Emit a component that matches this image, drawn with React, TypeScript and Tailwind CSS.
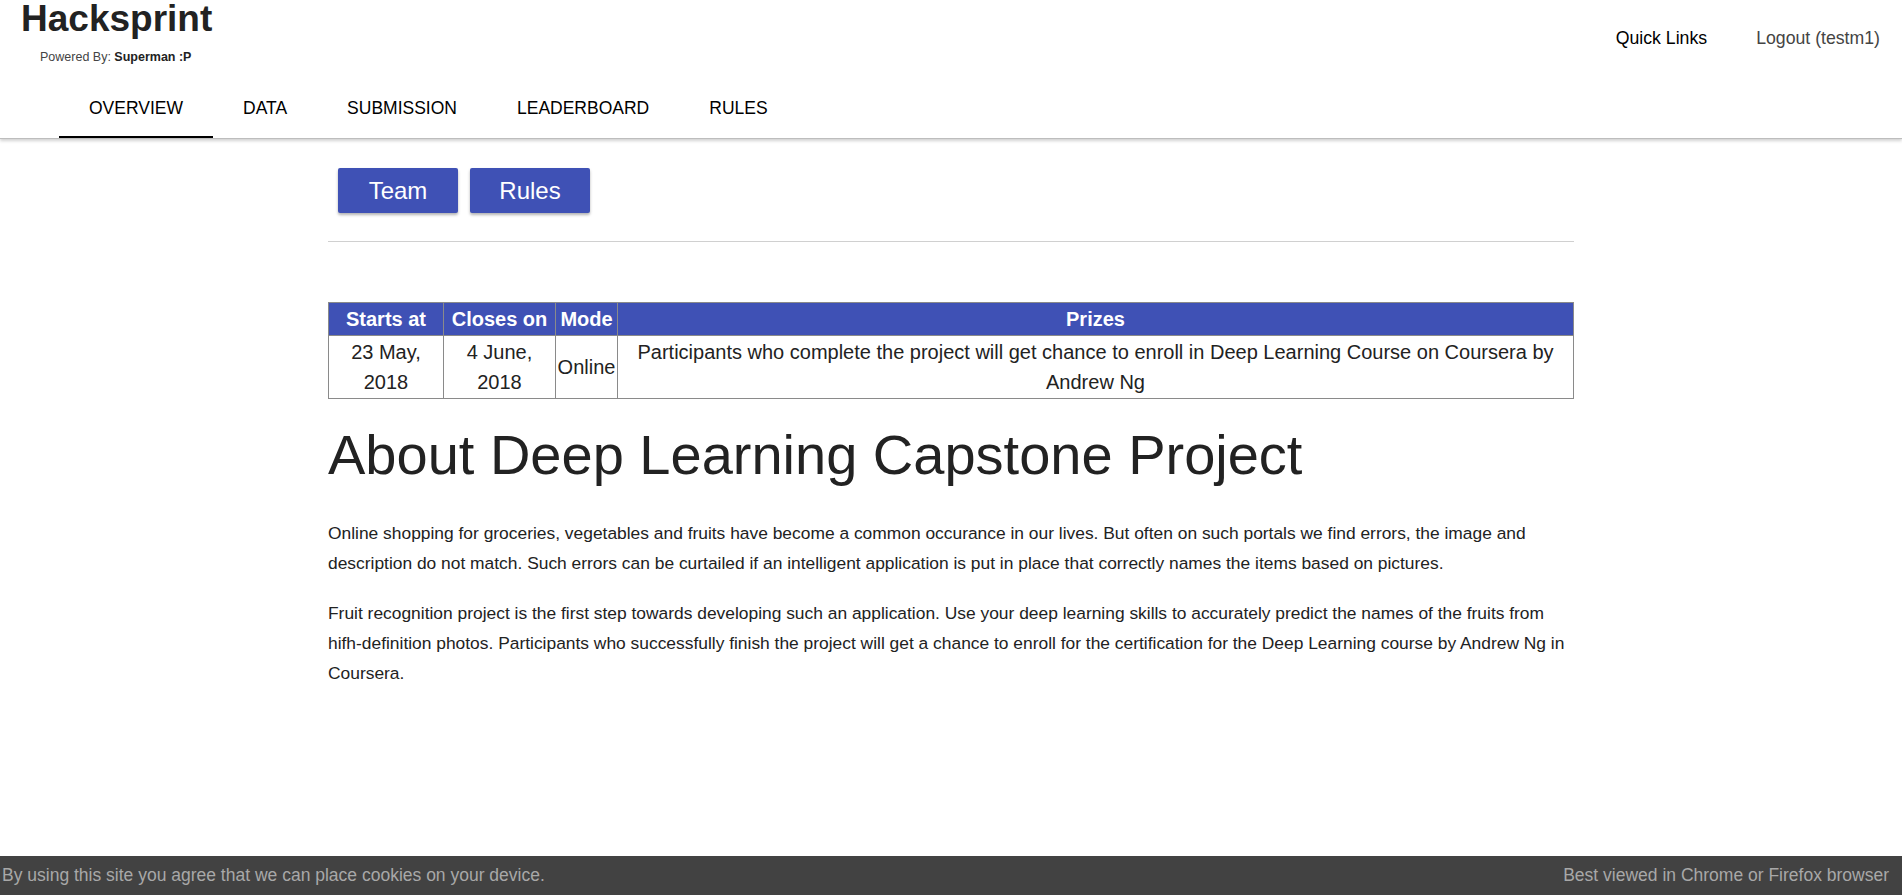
const tabs = ["OVERVIEW", "DATA", "SUBMISSION", "LEADERBOARD", "RULES"];

function Header() {
  return (
    <header className="relative border-b border-[#bdbdbd] bg-white shadow-[0_2px_3px_rgba(0,0,0,0.18)]">
      <div className="flex items-start justify-between">
        <div className="pl-[21px]">
          <h1 className="text-[37px] leading-none font-bold text-[#222]">Hacksprint</h1>
          <p className="mt-[12px] ml-[19px] text-[12.5px] leading-4 text-[#444]">
            Powered By: <span className="font-bold text-[#222]">Superman :P</span>
          </p>
        </div>
        <div className="flex items-center gap-[49px] pt-[27px] pr-[22px] text-[17.7px] leading-[22px]">
          <a className="text-black">Quick Links</a>
          <a className="text-[#444]">Logout (testm1)</a>
        </div>
      </div>
      <nav className="mt-[13px] flex pl-[59px]">
        {tabs.map((t, i) => (
          <a
            key={t}
            className="relative flex h-[60px] items-center px-[30px] text-[17.5px] text-black"
          >
            {t}
            {i === 0 && <span className="absolute inset-x-0 bottom-0 h-[2px] bg-black" />}
          </a>
        ))}
      </nav>
    </header>
  );
}

function InfoTable() {
  return (
    <table className="w-full table-fixed border-collapse text-center text-[20px] text-[#222]">
      <colgroup>
        <col className="w-[115px]" />
        <col className="w-[112px]" />
        <col className="w-[62px]" />
        <col />
      </colgroup>
      <thead>
        <tr className="bg-[#3f51b5] font-bold text-white">
          <th className="border border-[#8a8a8a] leading-[32px]">Starts at</th>
          <th className="border border-[#8a8a8a] leading-[32px]">Closes on</th>
          <th className="border border-[#8a8a8a] leading-[32px]">Mode</th>
          <th className="border border-[#8a8a8a] leading-[32px]">Prizes</th>
        </tr>
      </thead>
      <tbody>
        <tr className="leading-[30px]">
          <td className="border border-[#8a8a8a] px-[14px] py-[1px]">23 May, 2018</td>
          <td className="border border-[#8a8a8a] px-[14px] py-[1px]">4 June, 2018</td>
          <td className="border border-[#8a8a8a] py-[1px]">Online</td>
          <td className="border border-[#8a8a8a] px-[12px] py-[1px]">
            Participants who complete the project will get chance to enroll in Deep Learning Course on
            Coursera by Andrew Ng
          </td>
        </tr>
      </tbody>
    </table>
  );
}

export default function App() {
  return (
    <div className="min-h-[895px] bg-white font-['Liberation_Sans',Arial,sans-serif]">
      <Header />
      <main className="mx-auto w-[1246px] pb-[80px]">
        <div className="flex gap-[12px] pt-[29px] pl-[10px]">
          <button className="h-[45px] w-[120px] rounded-[2px] bg-[#3f51b5] text-[24px] text-white shadow-[0_2px_3px_rgba(0,0,0,0.3)]">
            Team
          </button>
          <button className="h-[45px] w-[120px] rounded-[2px] bg-[#3f51b5] text-[24px] text-white shadow-[0_2px_3px_rgba(0,0,0,0.3)]">
            Rules
          </button>
        </div>
        <hr className="mt-[28px] border-t border-[#d0d0d0]" />
        <div className="mt-[60px]">
          <InfoTable />
        </div>
        <h2 className="mt-[25px] text-[56px] leading-[1.1] text-[#222]">
          About Deep Learning Capstone Project
        </h2>
        <div className="mt-[32px] text-[17.4px] leading-[30px] text-[#222]">
          <p>
            Online shopping for groceries, vegetables and fruits have become a common occurance in our
            lives. But often on such portals we find errors, the image and description do not match. Such
            errors can be curtailed if an intelligent application is put in place that correctly names the
            items based on pictures.
          </p>
          <p className="mt-[20px]">
            Fruit recognition project is the first step towards developing such an application. Use your
            deep learning skills to accurately predict the names of the fruits from hifh-definition photos.
            Participants who successfully finish the project will get a chance to enroll for the
            certification for the Deep Learning course by Andrew Ng in Coursera.
          </p>
        </div>
      </main>
      <footer className="fixed inset-x-0 bottom-0 flex h-[39px] items-center justify-between bg-[#424242] pr-[13px] pl-[2px] text-[17.5px] text-[#a8a8a8]">
        <span>By using this site you agree that we can place cookies on your device.</span>
        <span>Best viewed in Chrome or Firefox browser</span>
      </footer>
    </div>
  );
}
